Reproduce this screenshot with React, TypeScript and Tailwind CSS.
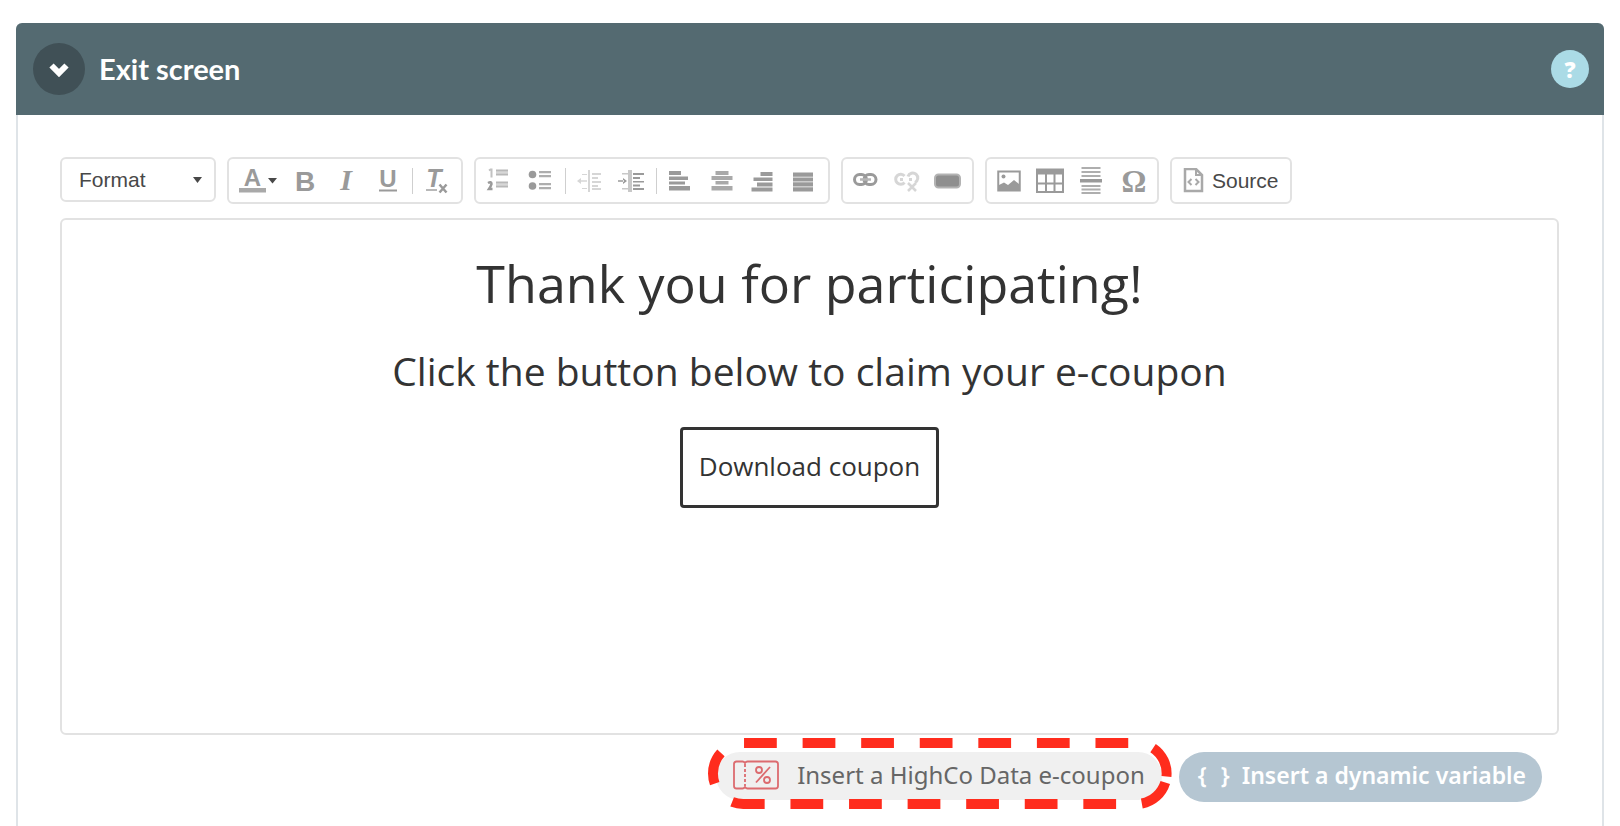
import { useState } from 'react'
import type { ReactNode } from 'react'

function Group({ children }: { children: ReactNode }) {
  return (
    <div className="flex h-[47px] items-center rounded-md border-2 border-[#e2e2e2] bg-white px-[3px]">
      {children}
    </div>
  )
}

function Separator() {
  return <span className="mx-1 h-[26px] w-px bg-[#cfcfcf]"></span>
}

function Tool({ label, faded, children }: { label: string; faded?: boolean; children: ReactNode }) {
  return (
    <button
      type="button"
      aria-label={label}
      disabled={faded}
      className="flex h-[41px] w-[41px] shrink-0 items-center justify-center text-[#9a9a9a] disabled:opacity-40"
    >
      <svg viewBox="0 0 28 28" className="h-7 w-7 overflow-visible" fill="currentColor">
        {children}
      </svg>
    </button>
  )
}

const arial = '"Liberation Sans", Arial, sans-serif'
const times = '"Liberation Serif", "Times New Roman", serif'

export default function App() {
  const [isOpen, setIsOpen] = useState(true)

  return (
    <main className="flex min-h-screen flex-col bg-white px-4 pt-[23px]">
      <section className="flex grow flex-col rounded-t-md border-x-2 border-[#dfe4e8]">
        {/* Panel header */}
        <header className="-mx-[2px] flex h-[92px] items-center rounded-t-md bg-[#546a71] pl-[17px] pr-[15px]">
          <button
            type="button"
            aria-label="Toggle section"
            aria-expanded={isOpen}
            onClick={() => setIsOpen(!isOpen)}
            className="flex h-[52px] w-[52px] items-center justify-center rounded-full bg-[#405056]"
          >
            <svg viewBox="0 0 20 16" className="h-4 w-5" fill="none" stroke="#fff" strokeWidth="6">
              <path d="M2.5 4.5L10 12L17.5 4.5" />
            </svg>
          </button>
          <h2 className="ml-[14px] grow font-['Lato',sans-serif] text-[29px] font-bold leading-9 text-white">
            Exit screen
          </h2>
          <button
            type="button"
            aria-label="Help"
            className="flex h-[38px] w-[38px] items-center justify-center rounded-full bg-[#abdbe6] font-['Open_Sans',sans-serif] text-[22px] font-extrabold leading-none text-white"
          >
            ?
          </button>
        </header>

        {isOpen && (
          <div className="pb-6 pl-[42px] pr-[43px] pt-[42px]">
            {/* Editor toolbar */}
            <div className="flex items-start gap-[11px]">
              <div className="grid h-[45px] w-[156px] items-center rounded-md border-2 border-[#e2e2e2]">
                <select
                  aria-label="Format"
                  className="col-start-1 row-start-1 w-full appearance-none bg-transparent pl-[17px] font-['Liberation_Sans',Arial,sans-serif] text-[21px] leading-7 text-[#484848] outline-none"
                >
                  <option>Format</option>
                </select>
                <svg
                  viewBox="0 0 9 6"
                  className="pointer-events-none col-start-1 row-start-1 mr-3 h-[6px] w-[9px] justify-self-end"
                  fill="#484848"
                >
                  <path d="M0 0H9L4.500 6Z" />
                </svg>
              </div>

              <Group>
                <button
                  type="button"
                  aria-label="Text color"
                  className="flex h-[41px] w-[53px] items-center justify-center text-[#9a9a9a]"
                >
                  <svg viewBox="0 0 40 28" className="h-7 w-10 overflow-visible" fill="currentColor">
                    <text x="13.500" y="19" textAnchor="middle" fontFamily={arial} fontWeight="700" fontSize="24">A</text>
                    <rect x="0" y="21" width="27" height="4.500" fill="#a9a9a9" />
                    <path d="M29 11H38L33.500 16.500Z" fill="#484848" />
                  </svg>
                </button>
                <Tool label="Bold">
                  <text x="13" y="24" textAnchor="middle" fontFamily={arial} fontWeight="700" fontSize="28">B</text>
                </Tool>
                <Tool label="Italic">
                  <text x="13" y="23" textAnchor="middle" fontFamily={times} fontWeight="700" fontStyle="italic" fontSize="30">I</text>
                </Tool>
                <Tool label="Underline">
                  <text x="14" y="20" textAnchor="middle" fontFamily={arial} fontWeight="700" fontSize="24">U</text>
                  <rect x="5" y="22.500" width="18" height="2" />
                </Tool>
                <Separator />
                <Tool label="Remove format">
                  <text x="10" y="20" textAnchor="middle" fontFamily={arial} fontWeight="700" fontStyle="italic" fontSize="25">T</text>
                  <rect x="2" y="22" width="11" height="2" opacity="0.7" />
                  <path d="M15.500 17.500l7 8M22.500 17.500l-7 8" fill="none" stroke="currentColor" strokeWidth="2.500" />
                </Tool>
              </Group>

              <Group>
                <Tool label="Numbered list">
                  <path d="M3 3.500L4.500 2.500H5.500V10.500" fill="none" stroke="currentColor" strokeWidth="2" opacity="0.6" />
                  <path d="M2 16Q5.500 14 5.500 17Q5 19 3 22H6.500" fill="none" stroke="currentColor" strokeWidth="2.500" />
                  <path d="M10 2.500h12v2H10zM10 6.500h12v2H10zM10 14.500h12v2H10zM10 18.500h12v2H10z" opacity="0.7" />
                  <path d="M10 4.500h12v2H10zM10 16.500h12v2H10z" opacity="0.4" />
                </Tool>
                <Tool label="Bulleted list">
                  <circle cx="5.500" cy="7.500" r="3.800" />
                  <circle cx="5.500" cy="19" r="3.800" />
                  <path d="M12 4h12v2.200H12zM12 8h12v2.200H12zM12 16h12v2.200H12zM12 20h12v2.200H12z" opacity="0.8" />
                </Tool>
                <Separator />
                <Tool label="Decrease indent" faded>
                  <path d="M11 3h2v22h-2zM15 6h9v2h-9zM15 10h6v2h-6zM15 14h9v2h-9zM15 18h6v2h-6zM15 21h9v2h-9zM3 13.200h7v1.600H3zM0 14l4-3v6zM5 7h5v1H5zM5 21h5v1H5z" />
                </Tool>
                <Tool label="Increase indent">
                  <path d="M0 13.200h6v1.600H0zM9 14l-4-3v6zM15 6h11v2H15zM15 10h7v2h-7zM15 14h11v1.600H15zM15 17.500h7v2h-7zM15 21h11v2H15z" />
                  <path d="M10 3h4v22h-4zM4 6h6v1.500H4zM4 21h6v1.500H4z" opacity="0.55" />
                </Tool>
                <Separator />
                <Tool label="Align left">
                  <path d="M1 4h12v4H1zM1 9.500h19v3.500H1zM1 14.500h16v3H1zM1 19h21v4.500H1z" />
                </Tool>
                <Tool label="Align center">
                  <path d="M6.500 4h13v4h-13zM2.500 9h21v4h-21zM6.500 14h13v3.500h-13zM2.500 19h21v4.500h-21z" opacity="0.85" />
                </Tool>
                <Tool label="Align right">
                  <path d="M10.500 5h12v4h-12zM3.500 10.500h19v3.500h-19zM7 15.500h15.500v4H7zM1.500 20.500h21v4h-21z" />
                </Tool>
                <Tool label="Justify">
                  <path d="M2 5.500h20v4H2zM2 11h20v3H2zM2 15.500h20v3.500H2zM2 20.500h20v4H2z" />
                  <path d="M2 9h20v12H2z" opacity="0.5" />
                </Tool>
              </Group>

              <Group>
                <Tool label="Link">
                  <g fill="none" stroke="currentColor">
                    <rect x="1.500" y="7.500" width="12" height="10" rx="5" strokeWidth="3" />
                    <rect x="11" y="7.500" width="12" height="10" rx="5" strokeWidth="3" />
                    <path d="M7 12.500H18" strokeWidth="2.500" stroke="#b5b5b5" />
                  </g>
                </Tool>
                <Tool label="Unlink" faded>
                  <g fill="none" stroke="currentColor">
                    <path d="M10.500 15.500A5 5 0 1 1 10.500 9M14 9.500A5 5 0 1 1 21 15.500M6 12.500h3M15 12.500h3" strokeWidth="3" />
                    <path d="M14 16l8 8M22 16l-8 8" strokeWidth="2.500" />
                  </g>
                </Tool>
                <Tool label="Button">
                  <rect x="0" y="7.500" width="25" height="13" rx="3.500" fill="#8f8f8f" stroke="#b3b3b3" strokeWidth="2" />
                </Tool>
              </Group>

              <Group>
                <Tool label="Image">
                  <rect x="1.250" y="4.500" width="21.500" height="19" fill="none" stroke="currentColor" strokeWidth="2" />
                  <circle cx="6.500" cy="9.500" r="2" />
                  <path d="M2 23V18L7 15.500L11 18L17 13L22 17V23Z" />
                </Tool>
                <Tool label="Table">
                  <path d="M-2 1.500h28v6H-2z" />
                  <path d="M-1 7V25H25V7M8 7V25M16.500 7V25M-1 16.500H25" fill="none" stroke="currentColor" strokeWidth="2" />
                </Tool>
                <Tool label="Horizontal line">
                  <g opacity="0.8">
                    <path d="M2.500 0h19v2h-19zM2.500 4h19v2h-19zM2.500 8h19v2h-19zM2.500 18h19v2h-19zM2.500 21.500h19v2h-19zM2.500 25h19v2h-19z" />
                  </g>
                  <path d="M1 12h22v3.500H1z" />
                </Tool>
                <Tool label="Special character">
                  <text x="14" y="25" textAnchor="middle" fontFamily={times} fontWeight="700" fontSize="31">Ω</text>
                </Tool>
              </Group>

              <Group>
                <button
                  type="button"
                  className="flex h-[41px] items-center gap-[7px] px-2 font-['Liberation_Sans',Arial,sans-serif] text-[21px] leading-7 text-[#484848]"
                >
                  <svg viewBox="0 0 22 26" className="h-[26px] w-[22px]" fill="none" stroke="#a9a9a9" strokeWidth="2.500">
                    <path d="M2 1H13L19 7V23H2Z" />
                    <path d="M13 1V7H19M8.500 11L5.500 14L8.500 17M12.500 11L15.500 14L12.500 17" strokeWidth="2" />
                  </svg>
                  Source
                </button>
              </Group>
            </div>

            {/* Editor content */}
            <div className="mt-[14px] flex min-h-[517px] flex-col items-center rounded-md border-2 border-[#e2e2e2] pt-[27px] font-['Open_Sans',sans-serif] text-[#333]">
              <h1 className="text-[52px] leading-[72px]">Thank you for participating!</h1>
              <p className="mt-6 text-[39px] leading-[56px]">Click the button below to claim your e-coupon</p>
              <button
                type="button"
                className="mt-7 h-[81px] rounded border-[3px] border-[#333] px-4 pb-1 text-[26px] leading-9"
              >
                Download coupon
              </button>
            </div>

            {/* Insert actions */}
            <div className="mt-[17px] flex items-start justify-end gap-[17px] pr-[17px] font-['Noto_Sans',sans-serif] text-[24px] leading-8">
              <button
                type="button"
                className="relative flex h-12 items-center gap-[18px] rounded-full bg-[#f0f0f0] px-[17px] pb-[2px] text-[#666]"
              >
                <svg viewBox="0 0 46 30" className="h-[30px] w-[46px]" fill="none" stroke="#dc6b6f" strokeWidth="1.800">
                  <path d="M12 3Q11 1.500 9.500 1.500H3.500Q1 1.500 1 4V26Q1 28.500 3.500 28.500H9.500Q11 28.500 12 27Q13 28.500 14.500 28.500H42.500Q45 28.500 45 26V4Q45 1.500 42.500 1.500H14.500Q13 1.500 12 3Z" />
                  <path d="M12 4V26" strokeDasharray="3 2" />
                  <circle cx="26" cy="10" r="3" />
                  <circle cx="34" cy="20" r="3" />
                  <path d="M37 7L23 22.500" />
                </svg>
                Insert a HighCo Data e-coupon
                <svg
                  viewBox="0 0 467 72"
                  preserveAspectRatio="none"
                  className="pointer-events-none absolute -left-2 -top-[14px] h-[72px] w-[calc(100%+18px)]"
                  fill="none"
                  stroke="#ff2c1d"
                  strokeWidth="10"
                >
                  <path
                    d="M460.600 44.500A30.500 30.500 0 0 1 431.500 66H35.500A30.500 30.500 0 0 1 35.500 5H431.500A30.500 30.500 0 0 1 460.600 44.500"
                    strokeDasharray="33 26"
                  />
                </svg>
              </button>
              <button
                type="button"
                className="flex h-[50px] items-center gap-3 rounded-full bg-[#b5c6d2] pb-1 pl-[19px] pr-4 text-[23px] font-semibold text-white"
              >
                <span className="flex gap-[14px]">
                  <span>{'{'}</span>
                  <span>{'}'}</span>
                </span>
                Insert a dynamic variable
              </button>
            </div>
          </div>
        )}
      </section>
    </main>
  )
}
